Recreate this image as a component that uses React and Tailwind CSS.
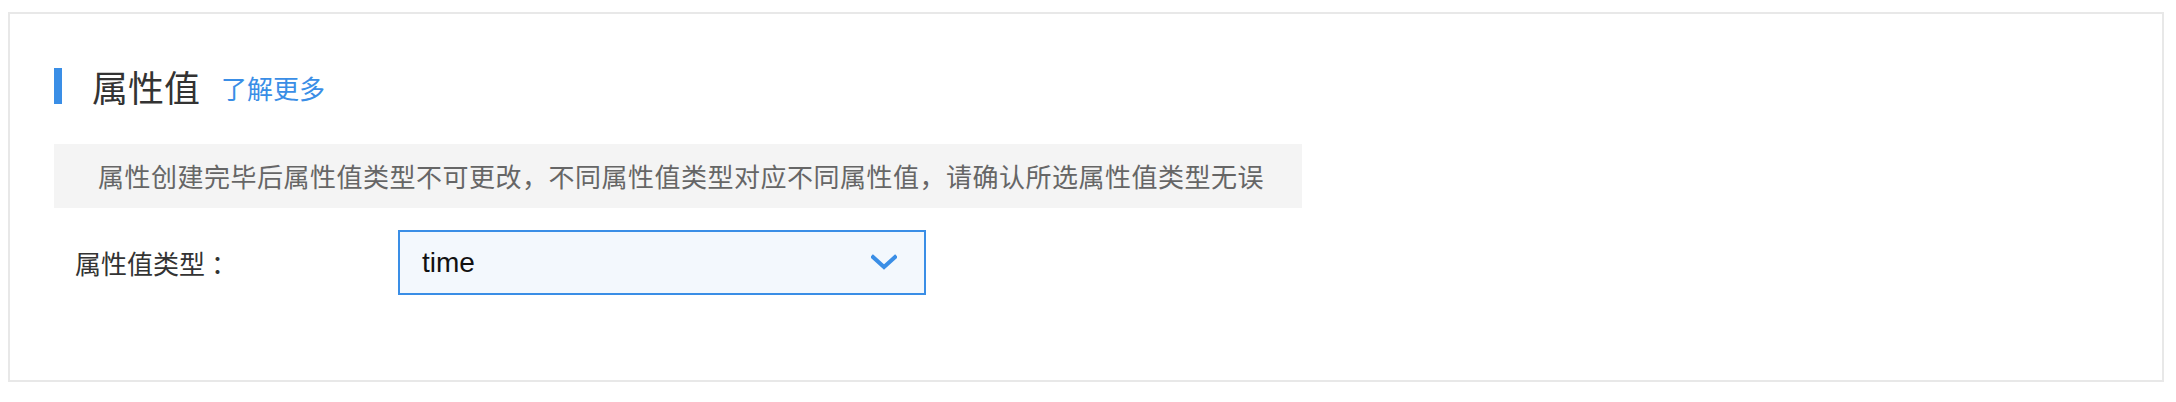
export default function App() {
    return (
        <div className="w-[2176px] h-[402px] bg-white pt-[12px] pl-[8px]" style={{ fontFamily: '"Noto Sans CJK SC", "Noto Sans", sans-serif' }}>
            <div className="w-[2156px] h-[370px] border-2 border-[#e8e8e8] px-[44px]">
                {/* header */}
                <div className="flex items-center h-[36px] mt-[54px]">
                    <div className="w-[8px] h-[36px] bg-[#3a8ee6]"></div>
                    <h2 className="ml-[30px] text-[36px] leading-none text-[#333]">属性值</h2>
                    <a className="ml-[21px] text-[26px] leading-none text-[#3a8ee6] mt-[4px]">了解更多</a>
                </div>

                {/* notice */}
                <div className="mt-[40px] w-[1248px] h-[64px] bg-[#f4f4f4] flex items-center pl-[44px]">
                    <p className="text-[26px] leading-none tracking-[0.5px] text-[#666]">
                        属性创建完毕后属性值类型不可更改，不同属性值类型对应不同属性值，请确认所选属性值类型无误
                    </p>
                </div>

                {/* form row */}
                <div className="flex items-center mt-[22px]">
                    <label className="w-[344px] pl-[21px] text-[26px] leading-none text-[#333]">
                        属性值类型<span className="ml-[6px]">：</span>
                    </label>
                    <div className="w-[528px] h-[65px] border-2 border-[#3a8ee6] bg-[#f3f8fd] flex items-center justify-between pl-[22px] pr-[27px]">
                        <span className="text-[28px] leading-none text-[#111]" style={{ fontFamily: '"Liberation Sans", "Noto Sans CJK SC", sans-serif' }}>time</span>
                        <svg width="26" height="17" viewBox="0 0 26 17" fill="none">
                            <polyline points="2,3 13,13 24,3" stroke="#3a8ee6" strokeWidth="4" strokeLinecap="square" />
                        </svg>
                    </div>
                </div>
            </div>
        </div>
    );
}
